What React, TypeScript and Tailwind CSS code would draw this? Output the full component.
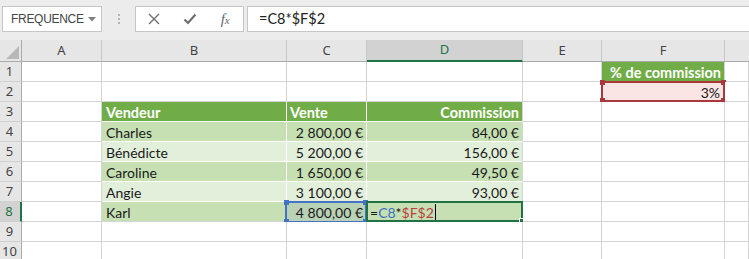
import React from "react";

const W = ["w-[22px]", "w-[80px]", "w-[185px]", "w-[80px]", "w-[156px]", "w-[79px]", "w-[123px]", "w-[24px]"];

const Corner = ({ color, pos }: { color: string; pos: string }) => (
  <span className={`absolute w-[5px] h-[5px] ${color} ${pos}`} />
);

type Shade = "dark" | "light";
const data: { name: string; vente: string; com: string; shade: Shade }[] = [
  { name: "Charles", vente: "2 800,00 €", com: "84,00 €", shade: "dark" },
  { name: "Bénédicte", vente: "5 200,00 €", com: "156,00 €", shade: "light" },
  { name: "Caroline", vente: "1 650,00 €", com: "49,50 €", shade: "dark" },
  { name: "Angie", vente: "3 100,00 €", com: "93,00 €", shade: "light" },
  { name: "Karl", vente: "4 800,00 €", com: "", shade: "dark" },
];

function RowHead({ n, active }: { n: number; active?: boolean }) {
  return (
    <div
      className={`${W[0]} shrink-0 h-[20px] flex items-center justify-center pr-[2px] text-[13px] border-b border-[#d0d0d0] ${
        active
          ? "bg-[#d2d2d2] text-[#217346] border-r-2 border-r-[#217346]"
          : "bg-[#e6e6e6] text-[#444] border-r border-r-[#ababab]"
      }`}
      style={{ fontFamily: "'Noto Sans', sans-serif" }}
    >
      {n}
    </div>
  );
}

function Cell({ i, className = "", children }: { i: number; className?: string; children?: React.ReactNode }) {
  return (
    <div className={`${W[i]} shrink-0 h-[20px] relative border-r border-b ${className}`}>{children}</div>
  );
}

const plain = "border-[#d4d4d4] bg-white";

export default function App() {
  return (
    <div className="w-[749px] h-[259px] overflow-hidden bg-white" style={{ fontFamily: "Lato, 'Liberation Sans', sans-serif" }}>
      {/* Formula bar */}
      <div className="h-[40px] bg-[#ececec] flex items-start pt-[6px]" style={{ fontFamily: "'Liberation Sans', sans-serif" }}>
        <div className="ml-[2px] w-[100px] h-[26px] bg-white border border-[#c6c6c6] flex items-center justify-between pl-[8px] pr-[5px]">
          <span className="text-[12px] text-[#444] tracking-[-0.3px]">FREQUENCE</span>
          <svg width="8" height="5" viewBox="0 0 8 5">
            <path d="M0 0 L8 0 L4 4.5 Z" fill="#808080" />
          </svg>
        </div>
        <div className="w-[33px] h-[26px] flex flex-col items-center justify-center gap-[2px]">
          <span className="w-[2px] h-[2px] bg-[#b5b5b5]" />
          <span className="w-[2px] h-[2px] bg-[#b5b5b5]" />
          <span className="w-[2px] h-[2px] bg-[#b5b5b5]" />
        </div>
        <div className="w-[109px] h-[26px] bg-white border border-[#c6c6c6] flex items-center">
          <div className="w-[36px] flex justify-center pl-[1px]">
            <svg width="12" height="12" viewBox="0 0 12 12">
              <path d="M1 1 L11 11 M11 1 L1 11" stroke="#6f6f6f" strokeWidth="1.4" />
            </svg>
          </div>
          <div className="w-[36px] flex justify-center">
            <svg width="14" height="12" viewBox="0 0 14 12">
              <path d="M1.5 6.5 L5 10 L12.5 1.5" stroke="#6f6f6f" strokeWidth="2.2" fill="none" />
            </svg>
          </div>
          <div className="w-[36px] flex justify-center items-center text-[#666]" style={{ fontFamily: "'Liberation Serif', serif" }}>
            <span className="italic text-[15px] leading-none">f</span>
            <span className="italic text-[11px] leading-none mt-[3px]">x</span>
          </div>
        </div>
        <div className="ml-[3px] flex-1 h-[26px] bg-white border border-[#c6c6c6] border-r-0 flex items-center pl-[11px]">
          <span className="text-[14.5px] text-[#222]" style={{ fontFamily: "Lato, sans-serif" }}>=C8*$F$2</span>
        </div>
      </div>

      {/* Column headers */}
      <div className="flex h-[22px] bg-[#e6e6e6] border-b border-[#ababab] text-[13px] text-[#444]" style={{ fontFamily: "'Noto Sans', sans-serif" }}>
        <div className={`${W[0]} shrink-0 flex items-end justify-end p-[2px] border-r border-[#ababab]`}>
          <svg width="13" height="13" viewBox="0 0 13 13">
            <path d="M13 0 L13 13 L0 13 Z" fill="#b9b9b9" />
          </svg>
        </div>
        {["A", "B", "C", "D", "E", "F"].map((l, k) => (
          <div
            key={l}
            className={`${W[k + 1]} shrink-0 flex items-center justify-center border-r border-[#c8c8c8] ${
              l === "D" ? "bg-[#d2d2d2] text-[#217346] border-b-2 border-b-[#217346] -mb-[1px]" : ""
            }`}
          >
            {l}
          </div>
        ))}
        <div className={`${W[7]} shrink-0`} />
      </div>

      {/* Row 1 */}
      <div className="flex text-[14px] text-[#1a1a1a]">
        <RowHead n={1} />
        <Cell i={1} className={plain} />
        <Cell i={2} className={plain} />
        <Cell i={3} className={plain} />
        <Cell i={4} className={plain} />
        <Cell i={5} className={plain} />
        <Cell i={6} className="border-[#d4d4d4] border-b-white bg-[#70ad47] flex items-center justify-end pr-[3px] pt-[2px] text-white font-bold text-[14.5px]">
          % de commission
        </Cell>
        <Cell i={7} className={plain} />
      </div>

      {/* Row 2 */}
      <div className="flex text-[14px] text-[#1a1a1a]">
        <RowHead n={2} />
        <Cell i={1} className={plain} />
        <Cell i={2} className={plain} />
        <Cell i={3} className={plain} />
        <Cell i={4} className={plain} />
        <Cell i={5} className={plain} />
        <Cell i={6} className="border-[#d4d4d4] bg-[#fbe4e4] flex items-center justify-end pr-[4px] pt-[2px]">
          3%
          <div className="absolute -left-[1px] -top-[1px] -right-[1px] -bottom-[1px] border-2 border-[#a9373b]">
            <Corner color="bg-[#a9373b]" pos="-left-[3px] -top-[3px]" />
            <Corner color="bg-[#a9373b]" pos="-right-[3px] -top-[3px]" />
            <Corner color="bg-[#a9373b]" pos="-left-[3px] -bottom-[3px]" />
            <Corner color="bg-[#a9373b]" pos="-right-[3px] -bottom-[3px]" />
          </div>
        </Cell>
        <Cell i={7} className={plain} />
      </div>

      {/* Row 3 - table header */}
      <div className="flex text-[14px] text-[#1a1a1a]">
        <RowHead n={3} />
        <Cell i={1} className={plain} />
        <Cell i={2} className="border-white bg-[#70ad47] text-white font-bold text-[14.5px] flex items-center pl-[4px] pt-[2px]">Vendeur</Cell>
        <Cell i={3} className="border-white bg-[#70ad47] text-white font-bold text-[14.5px] flex items-center pl-[3px] pt-[2px]">Vente</Cell>
        <Cell i={4} className="border-white border-r-[#d4d4d4] bg-[#70ad47] text-white font-bold text-[14.5px] flex items-center justify-end pr-[3px] pt-[2px]">Commission</Cell>
        <Cell i={5} className={plain} />
        <Cell i={6} className={plain} />
        <Cell i={7} className={plain} />
      </div>

      {data.map((d, idx) => {
        const bg = d.shade === "dark" ? "bg-[#c6e0b4]" : "bg-[#e2efda]";
        const last = idx === data.length - 1;
        const rowNum = idx + 4;
        return (
          <div key={d.name} className="flex text-[14px] text-[#1a1a1a]">
            <RowHead n={rowNum} active={last} />
            <Cell i={1} className={plain} />
            <Cell i={2} className={`border-white ${last ? "border-b-[#d4d4d4]" : ""} ${bg} flex items-center pl-[4px] pt-[2px]`}>{d.name}</Cell>
            {last ? (
              <Cell i={3} className="border-white border-b-[#d4d4d4] bg-[#b9d2b6] flex items-center justify-end pr-[3px] pt-[2px]">
                {d.vente}
                <div className="absolute -left-[2px] -top-[1px] -right-[1px] -bottom-[2px] border-2 border-[#4472c4]">
                  <Corner color="bg-[#4472c4]" pos="-left-[3px] -top-[3px]" />
                  <Corner color="bg-[#4472c4]" pos="-right-[3px] -top-[3px]" />
                  <Corner color="bg-[#4472c4]" pos="-left-[3px] -bottom-[3px]" />
                  <Corner color="bg-[#4472c4]" pos="-right-[3px] -bottom-[3px]" />
                </div>
              </Cell>
            ) : (
              <Cell i={3} className={`border-white ${bg} flex items-center justify-end pr-[3px] pt-[2px]`}>{d.vente}</Cell>
            )}
            {last ? (
              <Cell i={4} className={`border-[#d4d4d4] ${bg} flex items-center pl-[3px] pt-[2px]`}>
                <span className="text-[#1a1a1a]">=</span>
                <span className="text-[#3d6fc0]">C8</span>
                <span className="text-[#1a1a1a]">*</span>
                <span className="text-[#b9403f]">$F$2</span>
                <span className="w-[1px] h-[16px] bg-black ml-[1px] -mt-[2px]" />
                <div className="absolute -left-[1px] -top-[1px] -right-[1px] -bottom-[1px] border-2 border-[#217346]">
                  <span className="absolute w-[6px] h-[6px] bg-[#217346] border border-white -right-[4px] -bottom-[4px]" />
                </div>
              </Cell>
            ) : (
              <Cell i={4} className={`border-white border-r-[#d4d4d4] ${bg} flex items-center justify-end pr-[3px] pt-[2px]`}>{d.com}</Cell>
            )}
            <Cell i={5} className={plain} />
            <Cell i={6} className={plain} />
            <Cell i={7} className={plain} />
          </div>
        );
      })}

      {[9, 10].map((n) => (
        <div key={n} className="flex">
          <RowHead n={n} />
          <Cell i={1} className={plain} />
          <Cell i={2} className={plain} />
          <Cell i={3} className={plain} />
          <Cell i={4} className={plain} />
          <Cell i={5} className={plain} />
          <Cell i={6} className={plain} />
          <Cell i={7} className={plain} />
        </div>
      ))}
    </div>
  );
}
